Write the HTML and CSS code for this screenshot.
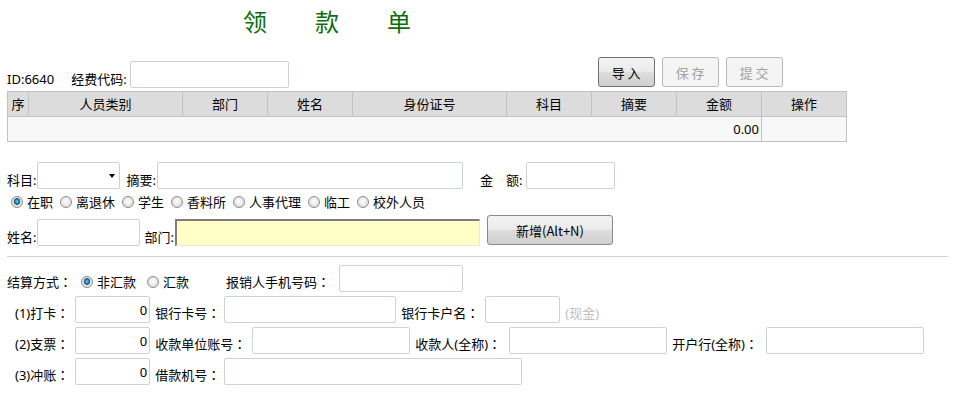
FILE: index.html
```html
<!DOCTYPE html>
<html lang="zh-CN">
<head>
<meta charset="utf-8">
<title>领款单</title>
<link rel="stylesheet" href="styles.css">
</head>
<body>
<div class="page">
  <h1 class="title">领　　款　　单</h1>

  <div class="row row-id">
    <span class="lbl">ID:6640</span>
    <span class="lbl lbl-code">经费代码:</span>
    <input class="inp w-code" type="text">
    <div class="btns">
      <button class="btn btn-top">导 入</button>
      <button class="btn btn-top" disabled>保 存</button>
      <button class="btn btn-top" disabled>提 交</button>
    </div>
  </div>

  <table class="grid">
    <colgroup>
      <col class="c-no"><col class="c-wide"><col class="c-mid"><col class="c-mid"><col class="c-wide"><col class="c-mid"><col class="c-mid"><col class="c-mid"><col class="c-mid">
    </colgroup>
    <thead>
      <tr><th>序</th><th>人员类别</th><th>部门</th><th>姓名</th><th>身份证号</th><th>科目</th><th>摘要</th><th>金额</th><th>操作</th></tr>
    </thead>
    <tbody>
      <tr><td colspan="8" class="total">0.00</td><td></td></tr>
    </tbody>
  </table>

  <div class="row row-subject">
    <span class="lbl">科目:</span>
    <span class="select-wrap"><select class="sel"><option></option></select></span>
    <span class="lbl lbl-summary">摘要:</span>
    <input class="inp w-summary" type="text">
    <span class="lbl lbl-amount">金　额:</span>
    <input class="inp w-amount" type="text">
  </div>

  <div class="row row-radios">
    <label class="opt"><input class="radio" type="radio" name="kind" checked>在职</label>
    <label class="opt"><input class="radio" type="radio" name="kind">离退休</label>
    <label class="opt"><input class="radio" type="radio" name="kind">学生</label>
    <label class="opt"><input class="radio" type="radio" name="kind">香料所</label>
    <label class="opt"><input class="radio" type="radio" name="kind">人事代理</label>
    <label class="opt"><input class="radio" type="radio" name="kind">临工</label>
    <label class="opt"><input class="radio" type="radio" name="kind">校外人员</label>
  </div>

  <div class="row row-name">
    <span class="lbl">姓名:</span>
    <input class="inp w-name" type="text">
    <span class="lbl lbl-gap">部门:</span>
    <input class="inp inp-dept" type="text">
    <button class="btn btn-add">新增(Alt+N)</button>
  </div>

  <hr class="sep">

  <div class="row row-pay">
    <span class="lbl">结算方式<span class="fc" lang="zh-Hant">：</span></span>
    <label class="opt opt-pay"><input class="radio" type="radio" name="pay" checked>非汇款</label>
    <label class="opt opt-pay"><input class="radio" type="radio" name="pay">汇款</label>
    <span class="lbl lbl-phone">报销人手机号码<span class="fc" lang="zh-Hant">：</span></span>
    <input class="inp w-phone" type="text">
  </div>

  <div class="row row-line">
    <span class="lbl lbl-indent">(1)打卡<span class="fc" lang="zh-Hant">：</span></span>
    <input class="inp w-num" type="text" value="0">
    <span class="lbl lbl-next">银行卡号<span class="fc" lang="zh-Hant">：</span></span>
    <input class="inp w-card" type="text">
    <span class="lbl lbl-next">银行卡户名<span class="fc" lang="zh-Hant">：</span></span>
    <input class="inp w-holder" type="text">
    <span class="lbl hint">(现金)</span>
  </div>

  <div class="row row-line">
    <span class="lbl lbl-indent">(2)支票<span class="fc" lang="zh-Hant">：</span></span>
    <input class="inp w-num" type="text" value="0">
    <span class="lbl lbl-next">收款单位账号<span class="fc" lang="zh-Hant">：</span></span>
    <input class="inp w-acct w-acct-a" type="text">
    <span class="lbl lbl-next">收款人(全称)<span class="fc" lang="zh-Hant">：</span></span>
    <input class="inp w-acct w-acct-b" type="text">
    <span class="lbl lbl-next">开户行(全称)<span class="fc" lang="zh-Hant">：</span></span>
    <input class="inp w-acct w-acct-b" type="text">
  </div>

  <div class="row row-line">
    <span class="lbl lbl-indent">(3)冲账<span class="fc" lang="zh-Hant">：</span></span>
    <input class="inp w-num" type="text" value="0">
    <span class="lbl lbl-next">借款机号<span class="fc" lang="zh-Hant">：</span></span>
    <input class="inp w-loan" type="text">
  </div>
</div>
</body>
</html>
```

FILE: styles.css
```css
html, body {
  margin: 0;
  padding: 0;
  background: #fff;
}

body {
  font-family: "Noto Sans", "Noto Sans CJK SC", sans-serif;
  font-size: 13px;
  color: #000;
}

.page {
  padding: 0 9px 0 7px;
}

.title {
  box-sizing: border-box;
  height: 57px;
  margin: 0;
  padding: 3px 0 0 236px;
  font-family: "Noto Sans CJK SC", sans-serif;
  font-size: 24px;
  font-weight: normal;
  line-height: 35px;
  color: #0b6f0b;
}

.row {
  display: flex;
  align-items: flex-end;
}

.lbl {
  line-height: 18px;
  white-space: nowrap;
}

/* full-width colon, centred in its cell */
.fc {
  font-family: "Noto Sans CJK TC", sans-serif;
}

.inp {
  box-sizing: border-box;
  height: 27px;
  margin: 0;
  padding: 0 2px;
  border: 1px solid #cdd2da;
  border-radius: 2px;
  background: #fff;
  font: inherit;
  outline: none;
}

/* --- top row --- */
.row-id {
  height: 31px;
}
.lbl-code {
  margin-left: 17px;
}
.w-code {
  width: 159px;
  margin-left: 3px;
}
.btns {
  display: flex;
  gap: 7px;
  margin-left: 309px;
  align-self: flex-start;
}

.btn {
  box-sizing: border-box;
  margin: 0;
  padding: 0;
  border: 1px solid #707070;
  border-radius: 3px;
  background: linear-gradient(#f3f3f3 0%, #ebebeb 48%, #dddddd 52%, #cfcfcf 100%);
  font-family: "Noto Sans CJK SC", sans-serif;
  font-size: 13px;
  color: #000;
  cursor: pointer;
}
.btn-top {
  width: 57px;
  height: 30px;
}
.btn:disabled {
  border-color: #b8b8b8;
  background: #f4f4f4;
  color: #a3a3a3;
  cursor: default;
}

/* --- table --- */
.grid {
  width: 840px;
  margin-top: 3px;
  border-collapse: collapse;
  table-layout: fixed;
  border: 1px solid #bdbdbd;
}
.c-no { width: 21px; }
.c-wide { width: 154px; }
.c-mid { width: 85px; }
.grid th,
.grid td {
  height: 24px;
  padding: 0 2px;
  border: 1px solid #c2c2c2;
  font-family: "Noto Sans CJK SC", sans-serif;
  font-weight: normal;
  line-height: 18px;
  white-space: nowrap;
  overflow: hidden;
}
.grid th {
  background: #dcdcdc;
  text-align: center;
}
.grid th:first-child {
  padding: 0;
}
.grid td {
  background: #f8f8f8;
}
.grid td.total {
  text-align: right;
  font-family: "Noto Sans", sans-serif;
  padding-right: 2px;
}

/* --- subject row --- */
.row-subject {
  margin-top: 20px;
}
.select-wrap {
  position: relative;
  display: inline-block;
  margin-left: 1px;
}
.sel {
  box-sizing: border-box;
  display: block;
  width: 83px;
  height: 27px;
  margin: 0;
  border: 1px solid #cdd2da;
  border-radius: 2px;
  background: #fff;
  appearance: none;
  -webkit-appearance: none;
  font: inherit;
  outline: none;
}
.select-wrap::after {
  content: "";
  position: absolute;
  right: 5px;
  top: 12px;
  border-left: 3.5px solid transparent;
  border-right: 3.5px solid transparent;
  border-top: 4px solid #000;
}
.lbl-summary {
  margin-left: 6px;
}
.lbl-gap {
  margin-left: 4px;
}
.w-summary {
  width: 306px;
  margin-left: 1px;
}
.lbl-amount {
  margin-left: 17px;
}
.w-amount {
  width: 89px;
  margin-left: 4px;
}

/* --- radios --- */
.row-radios {
  height: 26px;
  align-items: center;
}
.opt {
  display: inline-flex;
  align-items: center;
  line-height: 18px;
  font-family: "Noto Sans CJK SC", sans-serif;
  white-space: nowrap;
}
.radio {
  appearance: none;
  -webkit-appearance: none;
  box-sizing: border-box;
  width: 12px;
  height: 12px;
  margin: 0 4px 0 7px;
  border: 1px solid #8c8c8c;
  border-radius: 50%;
  background: radial-gradient(circle at 50% 45%, #ffffff 0, #f0f0f0 35%, #cfcfcf 100%);
}
.radio:checked {
  background: radial-gradient(circle at 50% 45%, #7fd2f5 0, #2c87c4 1.8px, #14507f 3px, #e9e9e9 3.6px, #d6d6d6 100%);
}
.row-radios .opt:first-child .radio {
  margin-left: 4px;
}

/* --- name row --- */
.row-name {
  height: 31px;
}
.w-name {
  width: 103px;
  margin-left: 1px;
}
.inp-dept {
  width: 305px;
  margin-left: 1px;
  border-style: solid;
  border-width: 2px 1px 1px 2px;
  border-color: #7d7d7d #e6e6e6 #e6e6e6 #7d7d7d;
  border-radius: 0;
  background: #ffffc6;
}
.btn-add {
  width: 126px;
  height: 30px;
  margin: 0 0 1px 7px;
  border-color: #8a8a8a;
}

/* --- separator --- */
.sep {
  height: 0;
  margin: 10px 0 8px 0;
  border: 0;
  border-top: 1px solid #d3d3d3;
}

/* --- settlement rows --- */
.row-pay .lbl,
.row-pay .opt {
  padding-bottom: 1px;
}
.opt-pay .radio {
  margin-left: 9px;
}
.opt-pay + .opt-pay .radio {
  margin-left: 11px;
}
.lbl-phone {
  margin-left: 37px;
}
.w-phone {
  width: 124px;
  margin-left: 9px;
}

.row-line {
  margin-top: 4px;
}
.row-line .lbl {
  padding-bottom: 1px;
}
.lbl-indent {
  padding-left: 8px;
}
.lbl-next {
  margin-left: 5px;
}
.row-line .inp {
  margin-left: 4px;
}
.row-line .w-num {
  width: 75px;
  margin-left: 6px;
  text-align: right;
  font-family: "Noto Sans", sans-serif;
}
.w-card {
  width: 172px;
}
.row-line .w-holder {
  width: 75px;
  margin-left: 6px;
}
.hint {
  margin-left: 5px;
  color: #c0c0c0;
}
.w-acct {
  width: 158px;
}
.row-line .w-acct-a {
  margin-left: 6px;
}
.row-line .w-acct-b {
  margin-left: 8px;
}
.w-loan {
  width: 298px;
}
```
